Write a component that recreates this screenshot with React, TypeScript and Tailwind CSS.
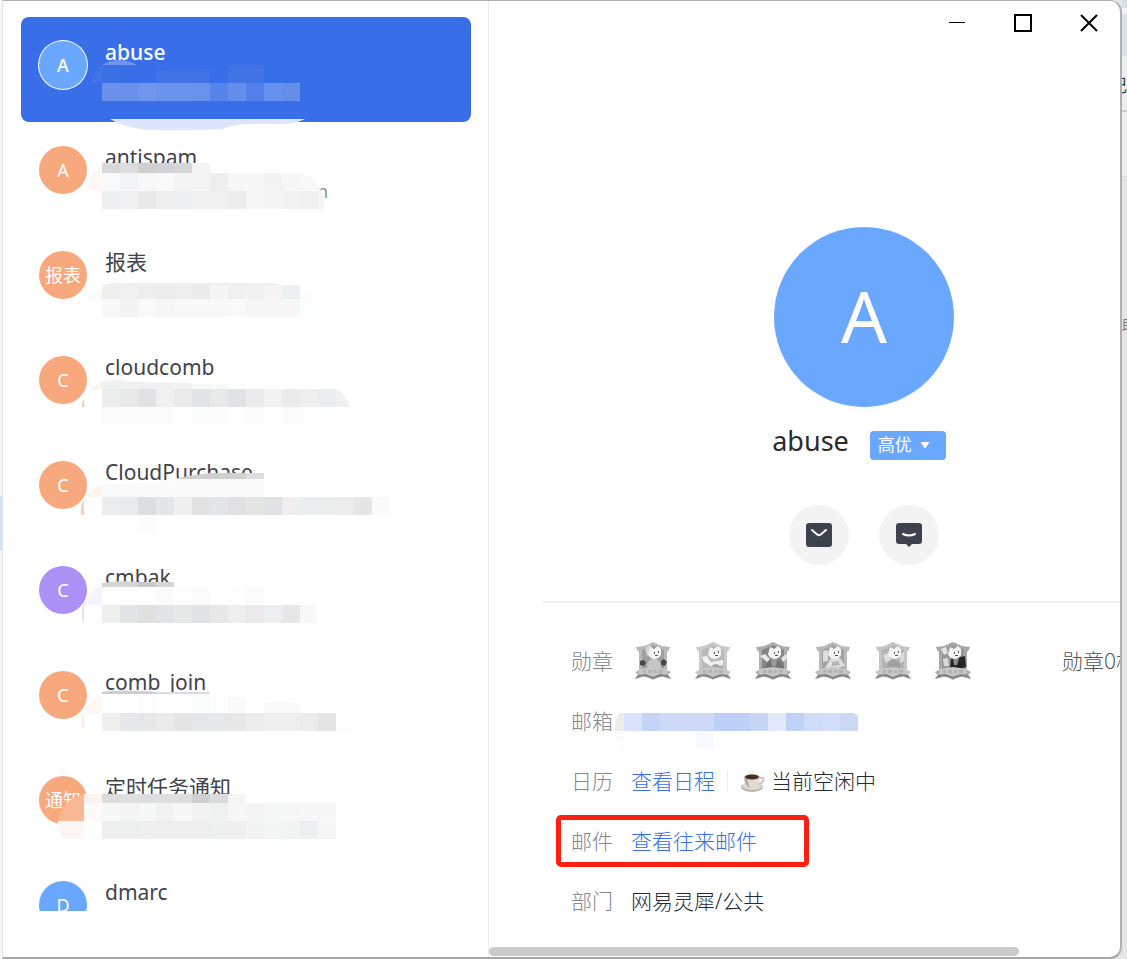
import { useState } from 'react';
import type { ReactNode } from 'react';
import clsx from 'clsx';

// A band of 18px mosaic tiles: top, height, tile colours from left to right
type Band = [number, number, string[]];
// A free-form patch: path data and fill
type Patch = [string, string];

interface Contact {
  name: string;
  initials: string;
  color: string;
  tail?: string;
  bands: Band[];
  patches: Patch[];
}

const TILE = 18;

const ORANGE = 'bg-[#f7a87c]';
const PURPLE = 'bg-[#ab91f6]';
const BLUE = 'bg-[#6aa8ff]';

const contacts: Contact[] = [
  {
    name: 'abuse',
    initials: 'A',
    color: BLUE,
    bands: [
      [66, 18, ['#6991ec', '#6991ec', '#6f95ed', '#6b93ed', '#6b93ed', '#6a92ec', '#5684eb', '#658eec', '#527fe9', '#6691ef', '#678fea']],
    ],
    patches: [
      ['M81 48Q98 38 116 48Z', '#6f95ec'],
      ['M70 66Q72 54 81 48V66Z', '#4073e8'],
      ['M81 48h18v18H81Z', '#3c6fe5'],
      ['M135 53L189 52V66H135Z', '#4173e7'],
      ['M207 49L243 48V66H207Z', '#4173e7'],
      ['M89 102H284Q274 107 262 107H225Q212 108 201 112Q175 114 129 113Q103 111 89 102Z', '#dde6fb'],
    ],
  },
  {
    name: 'antispam',
    initials: 'A',
    color: ORANGE,
    tail: 'n',
    bands: [
      [41, 10, ['#d8d8d9', '#dddddf', '#cfcfd0', '#d2d2d4', '#d6d6d8', '#f3f3f3']],
      [51, 18, ['#f8fafa', '#f2f5f5', '#f8f8f8', '#fafafa', '#f4f4f4', '#f4f4f4', '#eeeeef', '#f7f7f7', '#f7f7f7', '#f3f3f3', '#f7f7f7']],
      [69, 18, ['#ecefef', '#f0f0f1', '#e9e9ea', '#eeeeef', '#ecefef', '#f0f0f1', '#f0f0f1', '#ededee', '#f6f6f7', '#f5f5f5', '#f2f2f2', '#f0f0f1']],
    ],
    patches: [
      ['M66 69Q67 51 81 44V69Z', '#fef8f5'],
      ['M279 51Q293 53 300 69H279Z', '#f8f8f8'],
      ['M297 69H300Q304 78 303 87H297Z', '#f4f4f4'],
    ],
  },
  {
    name: '报表',
    initials: '报表',
    color: ORANGE,
    bands: [
      [58, 14, ['#efeff0', '#f0f0f1', '#eeeeef', '#ededee', '#eeeeef', '#ebebec', '#f5f5f5', '#f0f0f1', '#f1f1f2', '#f5f5f5', '#edf0f0']],
      [72, 18, ['#f8f8f8', '#f3f3f4', '#f9f9f9', '#f6f6f6', '#f8f8f8', '#f8f8f8', '#f8f8f8', '#f9f9f9', '#f7f7f7', '#f7f7f7', '#f7f7f7']],
    ],
    patches: [
      ['M81 58Q86 56 97 56H250L262 58Z', '#efeff0'],
      ['M70 72Q73 65 81 61V72Z', '#fef8f6'],
      ['M279 61Q290 63 294 72H279Z', '#fcfcfc'],
      ['M279 72H294Q298 80 297 90H279Z', '#fbfefe'],
    ],
  },
  {
    name: 'cloudcomb',
    initials: 'C',
    color: ORANGE,
    bands: [
      [57, 18, ['#eceeee', '#e9e9ea', '#e2e2e5', '#f0f0f0', '#eaeaea', '#e3e4e7', '#e9e9ea', '#e1e2e5', '#ebebeb', '#f0f3f2', '#ebebec', '#efeff0', '#ebecf0']],
      [75, 18, ['#fbfbfb', '#fcfcfc', '#fcfcfc', '#fbfbfb', '#fefefe', '#fcfcfc', '#fcfcfc', '#fefefe', '#fbfbfb', '#fefefe', '#fbfbfb', '#fdfdfd', '#fdfdfd']],
    ],
    patches: [
      ['M81 57V50Q96 46 107 50L165 51L189 53V57Z', '#f0f1f1'],
      ['M171 52H207V57H171Z', '#f7f8f8'],
      ['M70 57Q74 52 81 51V57Z', '#fef0ea'],
      ['M61 75Q61 70 63 67V75Z', '#f9c2a4'],
      ['M315 57Q325 62 329 75H315Z', '#f0f0f1'],
    ],
  },
  {
    name: 'CloudPurchase',
    initials: 'C',
    color: ORANGE,
    bands: [
      [60, 18, ['#ececed', '#e9eaec', '#dddee0', '#e4e6e9', '#efefef', '#e2e2e2', '#e3e6e9', '#e1e1e2', '#e5e5e6', '#e0e1e5', '#eeeeef', '#ebeeee', '#eceded', '#ececed', '#e6e6e7', '#fafafa']],
    ],
    patches: [
      ['M81 47Q140 46 157 42H243V60H81Z', '#fafafa'],
      ['M153 42Q170 38 189 36H243V42Z', '#d0d0d1'],
      ['M225 36h18v6h-18Z', '#dededf'],
      ['M65 60Q70 51 81 48V60Z', '#fef3ed'],
      ['M60 78Q59 68 63 63V78Z', '#fad2be'],
      ['M117 78h18v18h-18Z', '#fcfcfc'],
    ],
  },
  {
    name: 'cmbak',
    initials: 'C',
    color: PURPLE,
    bands: [
      [45, 18, ['#fefefe', '#fefefe', '#fefefe', '#fbfbfb', '#fefefe', '#fbfbfb', '#ffffff', '#fefefe', '#fbfbfb']],
      [63, 18, ['#eeeeee', '#e2e4e7', '#e0e0e1', '#e2e4e7', '#e7e8e8', '#e0e2e5', '#e8e8e8', '#eeeeee', '#eaeaea', '#ecefef', '#e7e7e8']],
    ],
    patches: [
      ['M81 45V41Q98 38 117 40H153V45Z', '#d5d5d6'],
      ['M117 40h18v5h-18Z', '#c9c9ca'],
      ['M62 63Q68 48 81 44V63Z', '#f6f3fe'],
      ['M62 81Q60 70 62 62L63 61V81Z', '#e4dcfc'],
      ['M279 63H293Q297 72 296 81H279Z', '#f8f8f8'],
    ],
  },
  {
    name: 'comb_join',
    initials: 'C',
    color: ORANGE,
    bands: [
      [47, 19, ['#ffffff', '#ffffff', '#fdfdfd', '#fefefe', '#fefefe', '#fafbfb', '#fdfdfd']],
      [66, 18, ['#efeff0', '#e7e8eb', '#e7e7e8', '#ebebeb', '#e6e6e7', '#e5e7ea', '#e5e7ea', '#e8e8e9', '#ececec', '#efefef', '#efefef', '#ececed', '#e5e5e6', '#fdfdfd']],
    ],
    patches: [
      ['M81 48V45Q100 42 135 45V48Z', '#cdced0'],
      ['M135 45h54v2h-54Z', '#dcdcdd'],
      ['M207 49L225 51V66H207Z', '#fafafa'],
      ['M243 55L279 56V66H243Z', '#f9f9f9'],
      ['M63 66Q67 52 81 48V66Z', '#fef8f5'],
      ['M61 80Q60 72 63 65V84Z', '#feeae0'],
    ],
  },
  {
    name: '定时任务通知',
    initials: '通知',
    color: ORANGE,
    bands: [
      [42, 9, ['#dcdcdd', '#dfdfe0', '#dedee0', '#dfdfe0', '#dedee0', '#cecfd0', '#dbdbdd', '#f5f5f5']],
      [51, 18, ['#f6f7f7', '#f4f4f4', '#f6f8f8', '#f2f2f3', '#f7f7f7', '#f3f3f4', '#eef1f0', '#f6f6f6', '#f5f5f5', '#f5f6f6', '#f6f6f6', '#f7f7f7', '#f7f7f7']],
      [69, 18, ['#eeeeef', '#edefef', '#efeff0', '#eeeeef', '#eeeeef', '#eeeeef', '#edf0ef', '#efeff0', '#f3f3f4', '#f3f4f4', '#f2f3f3', '#edf0f0', '#f6f6f6']],
    ],
    patches: [
      ['M37 69Q39 49 63 42V69Z', '#f8b795'],
      ['M37 69H63V87H42Q37 79 37 69Z', '#fef6f3'],
      ['M63 42h18v9H63Z', '#fef2ee'],
      ['M63 51h18v18H63Z', '#fefaf8'],
    ],
  },
  { name: 'dmarc', initials: 'D', color: BLUE, bands: [], patches: [] },
];

function Mosaic({ x, bands, patches }: { x: number; bands: Band[]; patches: Patch[] }) {
  return (
    <svg
      className="pointer-events-none absolute left-0 top-0 h-full w-full overflow-visible"
      aria-hidden="true"
    >
      {patches.map(([d, fill]) => (
        <path key={d} d={d} fill={fill} />
      ))}
      {bands.map(([y, h, fills]) =>
        fills.map((fill, i) => (
          <rect key={`${y}-${i}`} x={x + i * TILE} y={y} width={TILE} height={h} fill={fill} />
        ))
      )}
    </svg>
  );
}

interface RowProps {
  contact: Contact;
  selected: boolean;
  onSelect: () => void;
}

function ContactRow({ contact, selected, onSelect }: RowProps) {
  return (
    <li>
      <button
        type="button"
        onClick={onSelect}
        className={clsx(
          'relative flex h-[105px] w-full gap-[18px] rounded-lg px-[18px] pt-6 text-left',
          selected ? 'bg-[#386ee8] text-white' : 'text-[#3f434d]'
        )}
      >
        <span
          className={clsx(
            'flex size-12 shrink-0 items-center justify-center rounded-full text-lg text-white',
            contact.color,
            selected && 'font-medium ring-1 ring-white'
          )}
        >
          {contact.initials}
        </span>
        <span className="-mt-[3px] flex flex-col">
          <span className={clsx('text-[21px] leading-7', selected && 'font-medium')}>{contact.name}</span>
          {contact.tail && (
            <span className="pl-[212px] pt-2 text-lg leading-6 text-[#8b8d93]">{contact.tail}</span>
          )}
        </span>
        <Mosaic x={81} bands={contact.bands} patches={contact.patches} />
      </button>
    </li>
  );
}

interface MedalArt {
  frame: string;
  panel: string;
  shapes: Patch[];
}

// Each locked medal has its own figure inside the shared frame
const medals: MedalArt[] = [
  {
    frame: '#b9b9b9',
    panel: '#9e9e9e',
    shapes: [
      ['M11 8L14 3L18 6L18 12L13 15Z', '#d2d2d2'],
      ['M13 28Q12 19 20 17Q28 19 27 28Z', '#c6c6c6'],
      ['M6 20L10 19L12 22L10 25L6 24Z', '#484848'],
      ['M27 20L30 18L33 21L31 25L27 24Z', '#484848'],
    ],
  },
  {
    frame: '#c9c9c9',
    panel: '#b9b9b9',
    shapes: [
      ['M8 16L13 15L17 21L29 19L29 24L18 26L10 21Z', '#f2f2f2'],
      ['M16 28Q21 18 29 28Z', '#a6a6a6'],
    ],
  },
  {
    frame: '#aeaeae',
    panel: '#868686',
    shapes: [
      ['M6 15L11 13L16 18L13 21Z', '#e9e9e9'],
      ['M27 17L32 13L34 17L29 21Z', '#e0e0e0'],
      ['M11 28Q12 19 20 18Q29 19 30 28Z', '#737373'],
      ['M17 18L23 18L22 25L18 25Z', '#9c9c9c'],
    ],
  },
  {
    frame: '#b9b9b9',
    panel: '#a2a2a2',
    shapes: [
      ['M9 10L14 9L14 20L9 21Z', '#dcdcdc'],
      ['M11 27L17 17L26 17L31 25L24 27Z', '#dedede'],
      ['M18 21L24 20L26 24L18 25Z', '#b5b5b5'],
    ],
  },
  {
    frame: '#c6c6c6',
    panel: '#b4b4b4',
    shapes: [
      ['M9 14L14 12L17 18L12 22Z', '#dedede'],
      ['M26 13L30 11L30 20L26 22Z', '#dadada'],
      ['M13 28Q13 20 19 18Q27 20 27 28Z', '#a0a0a0'],
    ],
  },
  {
    frame: '#a8a8a8',
    panel: '#989898',
    shapes: [
      ['M7 8L12 6L14 12L10 14Z', '#e2e2e2'],
      ['M9 18L14 17L15 25L10 25Z', '#dadada'],
      ['M16 27L17 18L31 15L32 26L26 28Z', '#262626'],
      ['M19 17L25 17L23 24L20 24Z', '#8d8d8d'],
    ],
  },
];

function Medal({ art }: { art: MedalArt }) {
  return (
    <svg width="38" height="40" viewBox="0 0 38 40" aria-hidden="true">
      <path d="M2 6L10 5L19 1L28 5L36 6L35 9L33 11V29L37 31L34 34L37 38L29 36L24 36L19 39L14 36L9 36L1 38L4 34L1 31L5 29V11L3 9Z" fill={art.frame} />
      <path d="M8 9L19 4L30 9V28H8Z" fill={art.panel} />
      {art.shapes.map(([d, fill]) => (
        <path key={d} d={d} fill={fill} />
      ))}
      <path d="M15 10L16 6L20 8L24 5L27 8V14Q25 18 20 18Q15 17 14 13Z" fill="#f4f4f4" />
      <path d="M20 11h1v2h-1ZM24 10h1v2h-1ZM21 14h3v1h-3Z" fill="#555" />
      <path d="M5 28L19 26L33 28V33L19 35L5 33Z" fill="#c6c6c6" />
      <path d="M9 29h3v3H9ZM14 29h4v3h-4ZM20 29h3v3h-3ZM25 29h4v3h-4Z" fill="#b3b3b3" />
      <path d="M1 38L4 34L12 33L19 36L26 33L34 34L37 38L29 35L19 38L9 35Z" fill="#858585" />
    </svg>
  );
}

function CoffeeCup() {
  return (
    <svg width="25" height="24" viewBox="0 0 25 24" aria-hidden="true">
      <ellipse cx="12" cy="18" rx="11" ry="5" fill="#b9b4ab" />
      <ellipse cx="12" cy="17" rx="10" ry="4" fill="#dedad2" />
      <path d="M19 9Q25 8 23 12Q22 15 18 15" fill="none" stroke="#cbc5bb" strokeWidth="2" />
      <path d="M4 7H20Q20 17 15 19H9Q4 17 4 7Z" fill="#e0dbd2" />
      <path d="M4 8Q5 17 10 19Q7 12 8 9Z" fill="#b1aaa0" />
      <ellipse cx="12" cy="8" rx="8" ry="3" fill="#d8d1c7" />
      <ellipse cx="12" cy="8" rx="7" ry="2.5" fill="#4b2c20" />
      <path d="M10 5Q8 3 11 1M13 5Q15 3 12 2" fill="none" stroke="#e5e5e5" />
    </svg>
  );
}

function MailIcon() {
  return (
    <svg width="28" height="26" viewBox="0 0 28 26" aria-hidden="true">
      <rect x="1" y="1" width="26" height="24" rx="3" fill="#3e424c" />
      <path d="M7 8L12.500 12.700Q14 13.600 15.500 12.700L21 8" fill="none" stroke="#fff" strokeWidth="2" strokeLinecap="round" />
    </svg>
  );
}

function ChatIcon() {
  return (
    <svg width="28" height="26" viewBox="0 0 28 26" aria-hidden="true">
      <path d="M4 1H24Q27 1 27 4V19Q27 22 24 22H17L14 25L11 22H4Q1 22 1 19V4Q1 1 4 1Z" fill="#3e424c" />
      <path d="M8 12Q14 15 20 12" fill="none" stroke="#fff" strokeWidth="2" strokeLinecap="round" />
    </svg>
  );
}

function DetailRow({ label, children }: { label: string; children: ReactNode }) {
  return (
    <div className="relative flex h-[60px] items-center">
      <dt className="w-[60px] shrink-0 text-[#85878d]">{label}</dt>
      <dd className="flex flex-1 items-center">{children}</dd>
    </div>
  );
}

function WindowButton({ label, children }: { label: string; children: ReactNode }) {
  return (
    <button type="button" aria-label={label} className="flex h-11 w-[62px] items-center justify-center">
      <svg width="20" height="20" viewBox="0 0 20 20" fill="none" stroke="#000" strokeWidth="2">
        {children}
      </svg>
    </button>
  );
}

export default function App() {
  const [active, setActive] = useState('abuse');

  return (
    <div className="flex h-screen overflow-hidden bg-[#e5e5e5] font-['Noto_Sans','Noto_Sans_CJK_SC',sans-serif]">
      {/* Window behind, left edge */}
      <div className="w-0.5 shrink-0 bg-[#f6f7f9] pt-[496px]">
        <div className="h-[54px] bg-[#d3e0fc]" />
      </div>

      <main className="flex min-w-0 flex-1 overflow-hidden rounded-r-xl border-b-2 border-l border-r-2 border-t border-b-[#a6a6a6] border-l-[#e1e3e8] border-r-[#b0b0b0] border-t-[#b0b0b0] bg-white">
        {/* Contact list */}
        <aside className="flex w-[486px] shrink-0 flex-col border-r border-[#ebecee] pb-[46px] pl-[18px] pr-[17px] pt-4">
          <ul className="min-h-0 flex-1 overflow-hidden">
            {contacts.map((contact) => (
              <ContactRow
                key={contact.name}
                contact={contact}
                selected={contact.name === active}
                onSelect={() => setActive(contact.name)}
              />
            ))}
          </ul>
        </aside>

        {/* Contact card */}
        <section className="flex min-w-0 flex-1 flex-col">
          <header className="flex shrink-0 justify-end gap-1">
            <WindowButton label="最小化">
              <path d="M2 9.5H18" strokeWidth="1" />
            </WindowButton>
            <WindowButton label="最大化">
              <path d="M2 2H18V18H2Z" />
            </WindowButton>
            <WindowButton label="关闭">
              <path d="M2 2L18 18M18 2L2 18" />
            </WindowButton>
          </header>

          <div className="min-h-0 flex-1 overflow-hidden">
            <div className="flex min-w-[750px] flex-col pt-[182px]">
              <div className="flex size-[180px] items-center justify-center self-center rounded-full bg-[#6aa8ff] pb-1 text-[72px] text-white">
                A
              </div>
              <div className="mt-4 flex items-center gap-[21px] self-center pr-[10px]">
                <h1 className="pb-1 text-[27px] leading-9 text-[#2b2b2b]">abuse</h1>
                <button
                  type="button"
                  className="mt-1 flex h-[29px] items-center gap-2 rounded-sm bg-[#6aa8ff] px-2 pr-4 text-[17px] text-white"
                >
                  高优
                  <svg width="10" height="6" viewBox="0 0 10 6" aria-hidden="true">
                    <path d="M1 0H9L5 6Z" fill="#fff" stroke="#fff" strokeLinejoin="round" />
                  </svg>
                </button>
              </div>
              <div className="mt-[42px] flex gap-[30px] self-center">
                <button type="button" aria-label="写邮件" className="flex size-[60px] items-center justify-center rounded-full bg-[#f3f3f3]">
                  <MailIcon />
                </button>
                <button type="button" aria-label="发消息" className="flex size-[60px] items-center justify-center rounded-full bg-[#f3f3f3]">
                  <ChatIcon />
                </button>
              </div>

              <dl className="ml-[53px] mt-9 border-t-2 border-[#f0f0f0] pl-[29px] pt-[28px] text-[21px] font-light leading-8 text-[#262a33]">
                <DetailRow label="勋章">
                  <span className="flex w-[431px] gap-[22px] pl-[3px]">
                    {medals.map((art, i) => (
                      <Medal key={i} art={art} />
                    ))}
                  </span>
                  <span className="whitespace-nowrap text-[#51555e]">勋章0枚</span>
                </DetailRow>
                <DetailRow label="邮箱">
                  <Mosaic
                    x={53}
                    bands={[
                      [22, 18, ['#dae3fb', '#c4d3f8', '#cddaf8', '#cedaf7', '#cfdaf8', '#bed0f7', '#bfd0f7', '#c7d6f7', '#e3e9fb', '#bfd1f6', '#d0dbf7', '#d2ddf8']],
                    ]}
                    patches={[
                      ['M53 22H48Q43 30 44 40H53Z', '#ececed'],
                      ['M44 40H53V58Q44 51 44 40Z', '#fafcfd'],
                      ['M125 40h18v18h-18Z', '#f7f9fe'],
                      ['M269 22H283L287 25V40H269Z', '#cbd8f6'],
                    ]}
                  />
                </DetailRow>
                <DetailRow label="日历">
                  <a href="#schedule" className="text-[#386ee8]">查看日程</a>
                  <span className="mx-3 h-5 w-px bg-[#ebecee]" />
                  <CoffeeCup />
                  <span className="ml-1.5">当前空闲中</span>
                </DetailRow>
                <DetailRow label="邮件">
                  <a href="#mails" className="text-[#386ee8]">查看往来邮件</a>
                  <span className="pointer-events-none absolute -left-[15px] top-1 h-[52px] w-[253px] rounded-[5px] border-5 border-[#ff1f10]" />
                </DetailRow>
                <DetailRow label="部门">网易灵犀/公共</DetailRow>
              </dl>
            </div>
          </div>

          {/* Horizontal scrollbar */}
          <div className="shrink-0 pb-px">
            <div className="h-[9px] w-[84%] rounded-full bg-[#cbcbcb]" />
          </div>
        </section>
      </main>

      {/* Window behind, right edge */}
      <div className="flex w-[5px] shrink-0 flex-col overflow-hidden text-[#3f434d]">
        <div className="h-2 bg-[#d9dee1]" />
        <div className="h-1.5 bg-[#f3f3f3]" />
        <div className="h-[42px] bg-[#dfe1e5]" />
        <div className="flex h-14 items-center justify-end border-b-2 border-[#cccccc] bg-[#eeeeee] pt-1 text-lg">记</div>
        <div className="h-[65px] border-b border-[#dddddd] bg-[#eeeeee]" />
        <div className="pt-[138px] text-sm text-[#8b7765]">助</div>
      </div>
    </div>
  );
}
